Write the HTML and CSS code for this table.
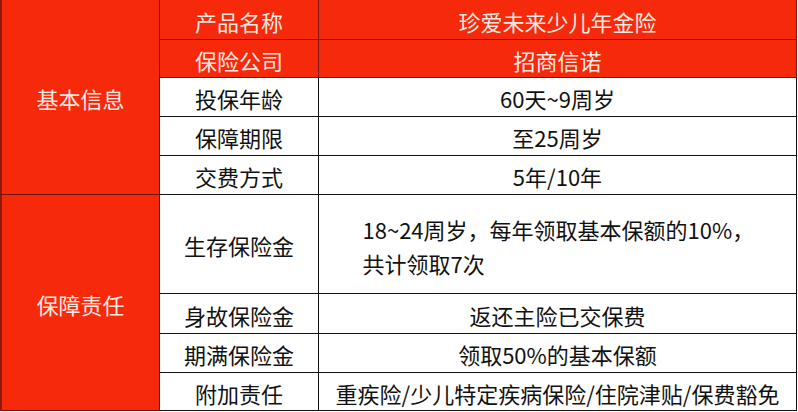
FILE: index.html
```html
<!DOCTYPE html>
<html lang="zh-CN">
<head>
<meta charset="utf-8">
<title>珍爱未来少儿年金险</title>
<link rel="stylesheet" href="styles.css">
</head>
<body>
<div class="table">
  <div class="cell sec sec-basic">基本信息</div>
  <div class="cell red r0">产品名称</div>
  <div class="cell red r0 last">珍爱未来少儿年金险</div>
  <div class="cell red r1">保险公司</div>
  <div class="cell red r1 last">招商信诺</div>
  <div class="cell r2">投保年龄</div>
  <div class="cell r2 last">60天~9周岁</div>
  <div class="cell r3">保障期限</div>
  <div class="cell r3 last">至25周岁</div>
  <div class="cell r4">交费方式</div>
  <div class="cell r4 last">5年/10年</div>

  <div class="cell sec sec-duty">保障责任</div>
  <div class="cell r5">生存保险金</div>
  <div class="cell r5 last"><div class="para">18~24周岁，每年领取基本保额的10%，<br>共计领取7次</div></div>
  <div class="cell r6">身故保险金</div>
  <div class="cell r6 last">返还主险已交保费</div>
  <div class="cell r7">期满保险金</div>
  <div class="cell r7 last">领取50%的基本保额</div>
  <div class="cell r8">附加责任</div>
  <div class="cell r8 last">重疾险/少儿特定疾病保险/住院津贴/保费豁免</div>
</div>
</body>
</html>
```

FILE: styles.css
```css
html, body {
  margin: 0;
  padding: 0;
  background: #ffffff;
}

.table {
  display: grid;
  width: 797px;
  grid-template-columns: 160px 159px 478px;
  grid-template-rows: 40px 38px 39px 39px 39px 99px 40px 39px 38px;
  font-family: "Noto Sans CJK SC", "Noto Sans", sans-serif;
  font-size: 22px;
  color: #111111;
}

.cell {
  box-sizing: border-box;
  display: flex;
  align-items: center;
  justify-content: center;
  border-right: 1px solid #111111;
  border-bottom: 1px solid #111111;
  line-height: 34px;
  padding-top: 2px;
  white-space: nowrap;
}

.red {
  background: #f62a0b;
  color: #fde9e2;
  border-color: #7a160c;
}

.sec {
  background: #f62a0b;
  color: #fde9e2;
  border-left: 2px solid #8c1a0e;
  border-right-color: #6e140c;
  border-bottom-color: #6e140c;
  grid-column: 1;
}

.sec-basic {
  grid-row: 1 / 6;
}

.sec-duty {
  grid-row: 6 / 10;
}

.para {
  text-align: left;
  width: 390px;
  padding-top: 2px;
}
```
